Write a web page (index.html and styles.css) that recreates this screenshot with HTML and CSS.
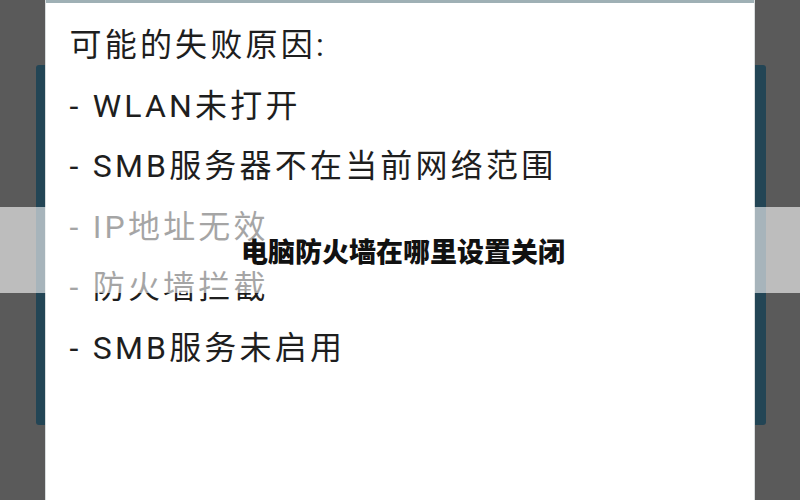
FILE: index.html
```html
<!DOCTYPE html>
<html lang="zh-CN">
<head>
  <meta charset="UTF-8" />
  <title>电脑防火墙在哪里设置关闭</title>
  <link rel="stylesheet" href="styles.css">
</head>
<body>
  <div class="screen">
    <!-- card sitting behind the dialog -->
    <div class="back-card"></div>

    <div class="dialog">
      <p class="line">可能的失败原因:</p>
      <p class="line">- WLAN未打开</p>
      <p class="line">- SMB服务器不在当前网络范围</p>
      <p class="line">- IP地址无效</p>
      <p class="line">- 防火墙拦截</p>
      <p class="line">- SMB服务未启用</p>
    </div>

    <!-- caption strip over the screenshot -->
    <div class="caption-band">
      <h1 class="caption">电脑防火墙在哪里设置关闭</h1>
    </div>
  </div>
</body>
</html>
```

FILE: styles.css
```css
* {
  box-sizing: border-box;
  margin: 0;
  padding: 0;
}

body {
  background: #5a5a5a;
  font-family: "Roboto", "Noto Sans CJK SC", sans-serif;
  overflow: hidden;
}

.screen {
  position: relative;
  width: 800px;
  height: 500px;
  display: flex;
  justify-content: center;
}

.back-card {
  position: absolute;
  top: 65px;
  left: 36px;
  width: 730px;
  height: 360px;
  background: #234555;
  border-radius: 3px;
}

.dialog {
  position: relative;
  width: 708px;
  height: 500px;
  margin-left: -1px;
  background: #fff;
  border-top: 3px solid #9fb0b5;
  box-shadow: 0 0 0 1px #d8dcdd;
  padding: 12px 0 0 24px;
}

.line {
  font-size: 32px;
  line-height: 60.5px;
  letter-spacing: 3.2px;
  font-weight: 400;
  color: #1e1e1e;
  white-space: nowrap;
}

.caption-band {
  position: absolute;
  left: 0;
  right: 0;
  top: 207px;
  height: 86px;
  background: rgba(255, 255, 255, 0.6);
  display: flex;
  align-items: center;
  justify-content: center;
}

.caption {
  font-family: "Noto Sans CJK SC", sans-serif;
  font-size: 27px;
  font-weight: 900;
  color: #111;
  margin-left: 6px;
}
```
